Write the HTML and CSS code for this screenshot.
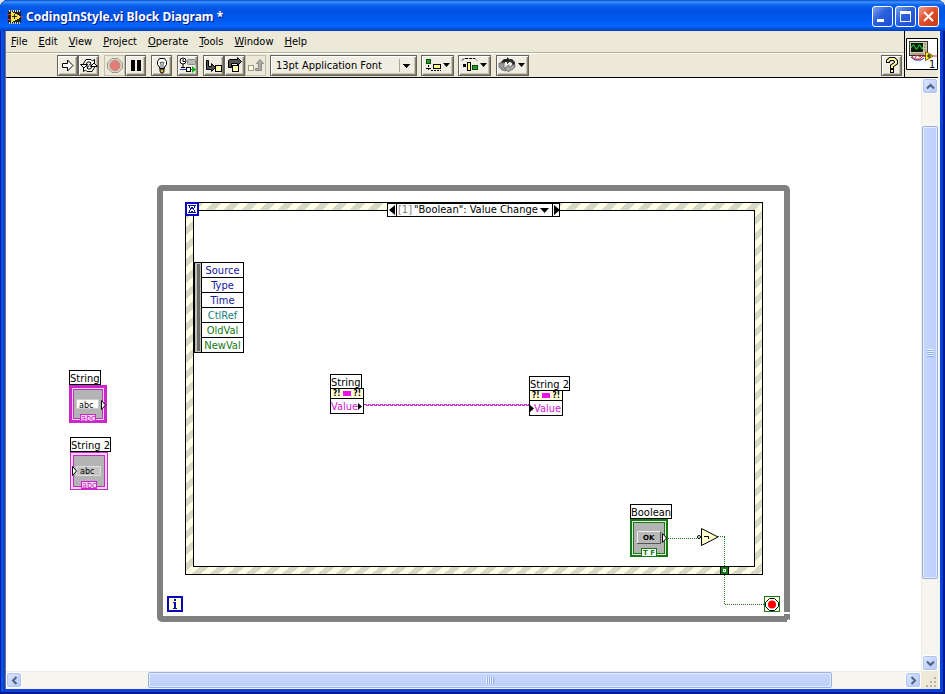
FILE: index.html
```html
<!DOCTYPE html>
<html lang="en">
<head>
<meta charset="utf-8">
<title>CodingInStyle.vi Block Diagram *</title>
<link rel="stylesheet" href="styles.css">
</head>
<body>
<div class="window">
  <header class="titlebar">
    <svg class="app-icon" width="16" height="16" viewBox="0 0 16 16" shape-rendering="crispEdges" aria-hidden="true">
      <path d="M1 2h13v12H1z" fill="#222"/>
      <path d="M2 1h1v2H2zM4 1h1v2H4zM6 1h1v2H6zM8 1h1v2H8zM10 1h1v2h-1zM12 1h1v2h-1zM2 13h1v2H2zM4 13h1v2H4zM6 13h1v2H6zM8 13h1v2H8zM10 13h1v2h-1zM12 13h1v2h-1z" fill="#d8d4b0"/>
      <path d="M0 5h4v1H0zM0 10h4v1H0zM12 7h4v1h-4z" fill="#e33030"/>
      <path d="M4 3h2v1h2v1h2v1h2v1h1v2h-1v1h-2v1H8v1H6v1H4z" fill="#ffe640"/><path d="M5 7h5v1H5zM7 5h1v5H7z" fill="#222"/>
    </svg>
    <h1 class="title">CodingInStyle.vi Block Diagram *</h1>
    <div class="win-buttons">
      <button class="win-btn" type="button" aria-label="Minimize"><svg width="19" height="19" viewBox="0 0 19 19"><path d="M4 12h7v3H4z" fill="#fff"/></svg></button>
      <button class="win-btn" type="button" aria-label="Maximize"><svg width="19" height="19" viewBox="0 0 19 19"><path d="M4 4h11v11H4zM5 7v7h9V7z" fill="#fff" fill-rule="evenodd"/></svg></button>
      <button class="win-btn close" type="button" aria-label="Close"><svg width="19" height="19" viewBox="0 0 19 19"><path d="M5 5l9 9M14 5l-9 9" stroke="#fff" stroke-width="2"/></svg></button>
    </div>
  </header>

  <div class="client">
    <div class="head">
      <div class="bars">
        <nav class="menubar">
          <button type="button"><u>F</u>ile</button>
          <button type="button"><u>E</u>dit</button>
          <button type="button"><u>V</u>iew</button>
          <button type="button"><u>P</u>roject</button>
          <button type="button"><u>O</u>perate</button>
          <button type="button"><u>T</u>ools</button>
          <button type="button"><u>W</u>indow</button>
          <button type="button"><u>H</u>elp</button>
        </nav>
        <div class="toolbar">
          <div class="group">
            <button class="tool" type="button" aria-label="Run"><svg width="18" height="17" viewBox="0 0 18 17"><path d="M3.500 6.500h5v-3.500l5.500 5.500-5.500 5.500v-3.500h-5z" fill="#fff" stroke="#000"/></svg></button>
            <button class="tool" type="button" aria-label="Run continuously"><svg width="18" height="17" viewBox="0 0 18 17"><g fill="#fff" stroke="#000"><path d="M3 7.500L6 2.500h5l1.500 1.500L14.500 2.500v5.500H9.500L11 6 10 5H7.500L6 7.500z"/><path d="M15 9.500L12 14.500H7L5.500 13 3.500 14.500V9h5L7 11l1 1h2.500L12 9.500z"/><path d="M.500 7.500h7L4 11zM17.500 9.500h-7L14 6z"/></g></svg></button>
          </div>
          <div class="group">
            <button class="tool disabled" type="button" aria-label="Abort" disabled><svg width="18" height="17" viewBox="0 0 18 17"><path d="M6 1.500h6l4.500 4.500v5l-4.500 4.500H6L1.500 11V6z" fill="#d9d4c5" stroke="#99968a"/><circle cx="9" cy="8.500" r="5" fill="#e47c78" stroke="#bb8680"/></svg></button>
            <button class="tool" type="button" aria-label="Pause"><svg width="18" height="17" viewBox="0 0 18 17"><path d="M4 3h4v11H4zM10 3h4v11h-4z"/></svg></button>
          </div>
          <div class="group">
            <button class="tool" type="button" aria-label="Highlight execution"><svg width="18" height="17" viewBox="0 0 18 17"><path d="M6.500 11.500V10L4.500 7.500v-3l2-3h5l2 3v3l-2 2.500v1.500z" fill="#fff" stroke="#000"/><path d="M7 5l1 2v4M11 5l-1 2v4M7 6l2-1 2 1" fill="none" stroke="#555"/><path d="M7 12h4v2l-1 2H8l-1-2z" fill="#dcb238" stroke="#000"/></svg></button>
          </div>
          <div class="group">
            <button class="tool" type="button" aria-label="Retain wire values"><svg width="18" height="17" viewBox="0 0 18 17"><circle cx="4" cy="4" r="3" fill="#fff" stroke="#000"/><path d="M4 7v4M2 10.500h4M4 4.500V2M4 4.500h2" stroke="#000"/><rect x="8.500" y="2.500" width="8" height="5" rx="1" fill="#bbb" stroke="#888"/><path d="M1 12.500h6" stroke="#1038e0"/><rect x="7.500" y="10.500" width="4" height="4" fill="#fff" stroke="#000"/><path d="M12 12.500h2" stroke="#080"/><path d="M13 9l4 3.500-4 3.500z" fill="#0aae20"/></svg></button>
          </div>
          <div class="group">
            <button class="tool" type="button" aria-label="Step into"><svg width="18" height="17" viewBox="0 0 18 17"><path d="M1.500 3.500h2v6h3v-3l4 4-4 4v-2h-5z" fill="#555" stroke="#000"/><rect x="10.500" y="8.500" width="6" height="6" fill="#ffffb0" stroke="#000"/></svg></button>
            <button class="tool" type="button" aria-label="Step over"><svg width="18" height="17" viewBox="0 0 18 17"><path d="M2.500 10.500v-7l1-1h8v-2l4 4-4 4v-2h-6v4z" fill="#555" stroke="#000"/><rect x="6.500" y="8.500" width="6" height="6" fill="#ffffb0" stroke="#000"/></svg></button>
            <button class="tool disabled" type="button" aria-label="Step out" disabled><svg width="18" height="17" viewBox="0 0 18 17"><rect x="1.500" y="8.500" width="5" height="5" fill="#ffffd0" stroke="#999"/><path d="M8.500 11.500h3v-5h-2l3.500-4 3.500 4h-2v7h-6z" fill="#aaa" stroke="#8c8a80"/></svg></button>
          </div>
          <select class="font-select" aria-label="Text settings"><option>13pt Application Font</option></select>
          <button class="tool wide" type="button" aria-label="Align objects"><svg width="30" height="17" viewBox="0 0 30 17"><rect x="3.500" y="2.500" width="4" height="4" fill="#25a02b" stroke="#064a08"/><rect x="10.500" y="7.500" width="7" height="4" fill="#ffff80" stroke="#000"/><path d="M5.500 8v6M3 11.500h5M8 13.500h10" stroke="#000" stroke-dasharray="2 1"/><path d="M20 6h7l-3.500 4z"/></svg></button>
          <button class="tool wide" type="button" aria-label="Distribute objects"><svg width="30" height="17" viewBox="0 0 30 17"><path d="M2 3.500l2-2h11l2 2" fill="none" stroke="#000" stroke-dasharray="3 1"/><path d="M3 7h3v3H3z"/><rect x="7.500" y="5.500" width="3" height="8" fill="#ffff80" stroke="#000"/><rect x="12.500" y="8.500" width="5" height="4" fill="#25a02b" stroke="#064a08"/><path d="M20 6h7l-3.500 4z"/></svg></button>
          <button class="tool wide reorder" type="button" aria-label="Reorder"><svg width="30" height="17" viewBox="0 0 30 17"><path d="M3 7V5l3-3h3V0l4 3.500L9 7V5H7L6 7z" fill="#222"/><path d="M12 2h2l3 3v5h-3V6l-2-1z" fill="#333"/><path d="M17 8v2l-3 3h-3v2l-5-3.500L11 8v2h2l1-2z" fill="#aaa" stroke="#777"/><path d="M1 6h5v5l2 1v2L4 13l-3-3z" fill="#999" stroke="#777"/><path d="M20 6h7l-3.500 4z"/></svg></button>
          <button class="tool help" type="button" aria-label="Context help"><svg width="18" height="17" viewBox="0 0 18 17"><path d="M5 6V4l2-2h4l2 2v2l-4 3v3" fill="none" stroke="#000" stroke-width="4"/><path d="M7 12h4v4H7z"/><path d="M5 5V4l2-2h4l2 2v2l-4 3v2" fill="none" stroke="#ffffa0" stroke-width="2"/><path d="M8 13h2v2H8z" fill="#ffffa0"/></svg></button>
        </div>
      </div>
      <div class="vi-pane">
        <svg width="32" height="32" viewBox="0 0 32 32" role="img" aria-label="VI icon">
          <path d="M.5.500h31v31H.5z" fill="#fff" stroke="#000"/>
          <rect x="3.500" y="3.500" width="18" height="14" fill="#d8cba8" stroke="#333"/>
          <rect x="5" y="5" width="12" height="9" fill="#031d08"/>
          <path d="M5 10l2-3 1 0 2 4 1 0 2-4 1 0 2 4 1-2" fill="none" stroke="#25dc40"/>
          <path d="M18 6h2M18 9h2M18 12h2M5 16h13" stroke="#777"/>
          <path d="M6 18l2 3h6l3-3 4 1M9 20l2-3 3 2 2-2" fill="none" stroke="#e02020"/>
          <path d="M5 19l4 3h6l3-2" fill="none" stroke="#20208c"/>
          <path d="M19.500 13.500v9l8-4.500z" fill="#ffe92f" stroke="#806000"/><path d="M21 18h4M23 16v4" stroke="#111"/><path d="M28 18h3" stroke="#e02020"/>
          <text class="vi-num" x="23" y="30">1</text>
        </svg>
      </div>
    </div>

    <div class="work">
      <main class="canvas">
        <section class="loop" aria-label="While loop"></section>
        <section class="event" aria-label="Event structure"><div class="event-inner"></div></section>

        <div class="selector">
          <button type="button" aria-label="Previous case"><svg width="8" height="12" viewBox="0 0 8 12"><path d="M7 1v10L1 6z"/></svg></button>
          <button class="case" type="button"><span class="idx">[1]</span>"Boolean": Value Change<svg width="9" height="11" viewBox="0 0 9 11"><path d="M0 3h9L4.500 8z"/></svg></button>
          <button type="button" aria-label="Next case"><svg width="8" height="12" viewBox="0 0 8 12"><path d="M1 1v10l6-5z"/></svg></button>
        </div>

        <div class="event-data">
          <div class="grip"></div>
          <ul>
            <li>Source</li><li>Type</li><li>Time</li>
            <li class="teal">CtlRef</li><li class="green">OldVal</li><li class="green">NewVal</li>
          </ul>
        </div>

        <svg class="wires" width="916" height="593" viewBox="6 78 916 593">
          <!-- loop resize corner -->
          <path d="M782 612h8v2h-8z" fill="#fff"/><path d="M787 620h1v-1h1v1h1v2h-3z" fill="#fff"/>
          <!-- event timeout -->
          <rect x="186" y="203" width="12" height="12" fill="#fff" stroke="#0808b8" stroke-width="2"/>
          <path d="M188 205h8v1h-8zM188 212h8v1h-8zM189 206h1v2h-1zM194 206h1v2h-1zM190 208h1v2h-1zM193 208h1v2h-1zM189 210h1v2h-1zM194 210h1v2h-1zM191 207h2v2h-2zM191 211h2v1h-2z" fill="#0808b8"/>
          <!-- iteration terminal -->
          <rect x="168" y="597" width="14" height="14" fill="#ffffe0" stroke="#0808b8" stroke-width="2"/>
          <path d="M174 599h2v2h-2zM173 602h3v6h1v1h-4v-1h1v-5h-1z" fill="#0808b8"/>
          <!-- string wire -->
          <path d="M364 404.500h165" stroke="#d030d0" stroke-dasharray="3 1"/><path d="M366 405.500h163" stroke="#d030d0" stroke-dasharray="3 1"/>
          <!-- boolean wires -->
          <g stroke="#187818" stroke-dasharray="1 1" fill="none"><path d="M668 538.500h30"/><path d="M718 536.500h7M724.500 537v67M725 604.500h39"/></g>
          <!-- not gate -->
          <circle cx="699" cy="537" r="1.500" fill="#fff" stroke="#000"/>
          <path d="M701.500 528.500v17l16.500-8.500z" fill="#ffffd0" stroke="#000"/><path d="M704 536.500h4.500v2.500" fill="none" stroke="#000"/>
          <!-- tunnel -->
          <rect x="720.500" y="566.500" width="8" height="8" fill="#187818" stroke="#000"/><rect x="723.500" y="569.500" width="2" height="2" fill="#187818" stroke="#fff"/>
          <!-- stop terminal -->
          <rect x="764.500" y="596.500" width="15" height="15" fill="#ffffe0" stroke="#187818"/>
          <path d="M769.500 598.500h5l4 4v4l-4 4h-5l-4-4v-4z" fill="#fff" stroke="#000"/><circle cx="772" cy="604.500" r="4" fill="#f00"/>
          <!-- string control -->
          <rect x="70.500" y="386.500" width="35" height="35" fill="#fbd8fb" stroke="#c828c8" stroke-width="3"/>
          <rect x="73.500" y="389.500" width="29" height="29" fill="#b4b4b4" stroke="#c828c8"/>
          <rect x="76.500" y="399.500" width="22" height="9" fill="#fff" stroke="#ccc"/>
          <path d="M101.500 400.500v9l4-4.500z" fill="#fff" stroke="#000"/>
          <rect x="80.500" y="414.500" width="15" height="7" fill="#fbd8fb" stroke="#c828c8"/>
          <text class="tiny" x="79" y="408">abc</text><text class="tiny type" x="81" y="421">abc</text>
          <!-- string indicator -->
          <rect x="70.500" y="452.500" width="37" height="37" fill="#fbd8fb" stroke="#c828c8"/>
          <rect x="73.500" y="455.500" width="31" height="31" fill="#b4b4b4" stroke="#c828c8"/>
          <rect x="76.500" y="466.500" width="24" height="9" fill="#c4c4c4" stroke="#ddd"/>
          <path d="M72.500 466.500v9l4-4.500z" fill="#fff" stroke="#000"/>
          <rect x="81.500" y="481.500" width="15" height="7" fill="#fbd8fb" stroke="#c828c8"/>
          <text class="tiny" x="80" y="474">abc</text><text class="tiny type" x="82" y="488">abc</text>
          <!-- boolean control -->
          <rect x="631" y="520" width="36" height="36" fill="#e4f0d8" stroke="#187818" stroke-width="2"/>
          <rect x="633.500" y="522.500" width="31" height="31" fill="#b4b4b4" stroke="#187818"/>
          <path d="M632.500 554.500v-33h33v33z" fill="none" stroke="#e4f0d8"/>
          <rect x="637.500" y="531.500" width="23" height="12" fill="#b8b8b8" stroke="#555"/><path d="M637.500 543v-11.500h23" fill="none" stroke="#eee"/>
          <path d="M662.500 533.500v9l4-4.500z" fill="#fff" stroke="#000"/>
          <rect x="641.500" y="548.500" width="15" height="8" fill="#fff" stroke="#187818"/>
          <text class="tiny ok" x="643" y="540">OK</text><text class="tiny tf" x="643" y="555">T F</text>
        </svg>

        <span class="label l-string">String</span>
        <span class="label l-string2">String 2</span>
        <span class="label l-boolean">Boolean</span>
        <div class="node n-string">
          <span class="label">String</span>
          <div class="prop"><div class="prop-head"><b>?!</b><i></i><b>?!</b></div><div class="prop-value">Value<svg width="4" height="7" viewBox="0 0 4 7"><path d="M0 0l4 3.500L0 7z"/></svg></div></div>
        </div>
        <div class="node n-string2">
          <span class="label">String 2</span>
          <div class="prop"><div class="prop-head"><b>?!</b><i></i><b>?!</b></div><div class="prop-value"><svg width="4" height="7" viewBox="0 0 4 7"><path d="M0 0l4 3.500L0 7z"/></svg>Value</div></div>
        </div>
      </main>

      <div class="scroll vertical">
        <button class="arrow" type="button" aria-label="Scroll up"><svg width="9" height="9" viewBox="0 0 9 9"><path d="M1 6.500L4.500 3 8 6.500"/></svg></button>
        <div class="track"><div class="before"></div><div class="thumb"></div><div class="after"></div></div>
        <button class="arrow" type="button" aria-label="Scroll down"><svg width="9" height="9" viewBox="0 0 9 9"><path d="M1 2.500L4.500 6 8 2.500"/></svg></button>
      </div>
      <div class="scroll horizontal">
        <button class="arrow" type="button" aria-label="Scroll left"><svg width="9" height="9" viewBox="0 0 9 9"><path d="M6.500 1L3 4.500 6.500 8"/></svg></button>
        <div class="track"><div class="before"></div><div class="thumb"></div><div class="after"></div></div>
        <button class="arrow" type="button" aria-label="Scroll right"><svg width="9" height="9" viewBox="0 0 9 9"><path d="M2.500 1L6 4.500 2.500 8"/></svg></button>
      </div>
      <div class="corner"><svg width="12" height="12" viewBox="0 0 12 12"><path d="M9 1h2v2H9zM5 5h2v2H5zM9 5h2v2H9zM1 9h2v2H1zM5 9h2v2H5zM9 9h2v2H9z" fill="#b8b4a2"/></svg></div>
    </div>
  </div>
</div>
</body>
</html>
```
FILE: styles.css
```css
* { box-sizing: border-box; }
body {
  margin: 0;
  background: #ece9d8;
  font: 11px/13px "DejaVu Sans Condensed", "Noto Sans", sans-serif;
  color: #000;
}
button, select { font: inherit; color: inherit; margin: 0; padding: 0; border: 0; background: none; }
svg { display: block; flex: none; }

.window {
  height: 100vh;
  display: flex;
  flex-direction: column;
  padding: 0 5px 5px;
  background: #0842d8;
  border-radius: 8px 8px 0 0;
  box-shadow: inset 1px 0 #001ea0, inset -2px -2px #001a90, inset 3px 0 #0b50ea;
  overflow: hidden;
}

.titlebar {
  flex: none;
  height: 31px;
  margin: 0 -5px;
  padding: 2px 6px 0 7px;
  display: flex;
  align-items: center;
  background: linear-gradient(#0a4ed0 0, #3c90ff 2px, #0a62ee 5px, #0054e3 10px, #0058ee 20px, #0066ff 26px, #0050d8 29px, #003dba 31px);
}
.title {
  flex: 1;
  margin: 0 0 0 3px;
  font: bold 12px/18px "Noto Sans", sans-serif;
  color: #fff;
  text-shadow: 1px 1px #0a1883;
}
.win-buttons { display: flex; gap: 2px; }
.win-btn {
  width: 21px;
  height: 21px;
  border: 1px solid #fff;
  border-radius: 3px;
  background: linear-gradient(135deg, #7da2f0, #2a5fdd 45%, #1c4fd0);
}
.win-btn.close { background: linear-gradient(135deg, #f0a088, #e0502c 45%, #c8391a); }

.client {
  flex: 1;
  min-height: 0;
  display: flex;
  flex-direction: column;
  border-left: 1px solid #77756c;
  border-right: 2px solid #f6f5ee;
  background: #ece9d8;
}
.head { flex: none; display: flex; border-bottom: 1px solid #000; }
.bars { flex: 1; }
.menubar {
  display: flex;
  align-items: center;
  gap: 11px;
  height: 22px;
  padding: 0 5px;
  border-bottom: 1px solid #b4b09e;
}
.toolbar {
  display: flex;
  align-items: center;
  gap: 4px;
  height: 24px;
  padding-left: 51px;
  padding-right: 2px;
  border-top: 1px solid #fff;
}
.group { display: flex; }
.group + .group { margin-left: 1px; }
.tool {
  width: 21px;
  height: 21px;
  display: flex;
  align-items: center;
  justify-content: center;
  border: 1px solid #66645a;
  background: #f0eee2;
  box-shadow: inset 1px 1px #fff, inset -1px -1px #88867a, inset -2px -2px #c8c4b2;
}
.tool.disabled { border-color: #c4c0ae; background: #ece9d8; box-shadow: none; }
.tool.wide { width: 33px; }
.tool.reorder { margin-left: 1px; }
.tool.help { margin-left: auto; }
.font-select {
  width: 147px;
  height: 21px;
  padding: 0 5px 1px;
  appearance: none;
  border: 1px solid #66645a;
  border-radius: 0;
  box-shadow: inset 1px 1px #fff, inset -1px -1px #88867a, inset -2px -2px #c8c4b2;
  background:
    conic-gradient(from -45deg at 50% 100%, #000 90deg, transparent 0) right 5px top 8px / 8px 4px no-repeat,
    linear-gradient(#aaa695, #aaa695) right 16px top 3px / 1px 13px no-repeat,
    #f0eee2;
  background:
    conic-gradient(from 135deg at 50% 100%, transparent 180deg, #000 180deg 270deg, transparent 0) right 5px top 8px / 0 0 no-repeat,
    linear-gradient(45deg, transparent 50%, #000 50%) right 9px top 8px / 4px 4px no-repeat,
    linear-gradient(-45deg, transparent 50%, #000 50%) right 5px top 8px / 4px 4px no-repeat,
    linear-gradient(#aaa695, #aaa695) right 16px top 3px / 1px 13px no-repeat,
    #f0eee2;
}
.vi-pane { flex: none; display: flex; align-items: center; padding: 0 0 0 1px; border-left: 1px solid #000; }
.vi-num { font: 11px "DejaVu Sans Condensed", sans-serif; }

.work {
  flex: 1;
  min-height: 0;
  display: grid;
  grid-template-columns: 1fr 17px;
  grid-template-rows: 1fr 18px;
}
.canvas { position: relative; overflow: hidden; background: #fff; }
.loop {
  position: absolute;
  left: 151px; top: 107px;
  width: 633px; height: 437px;
  border: 6px solid #808080;
  border-radius: 5px 5px 0 5px;
}
.event {
  position: absolute;
  left: 179px; top: 124px;
  width: 578px; height: 373px;
  padding: 7px;
  border: 1px solid #000;
  background: linear-gradient(to bottom right, #ffffe6 25%, #d8d8c6 25% 50%, #ffffe6 50% 75%, #d8d8c6 75%) 0 0 / 18px 16px;
}
.event-inner { height: 100%; border: 1px solid #000; background: #fff; }

.selector {
  position: absolute;
  left: 381px; top: 125px;
  display: flex;
  width: 173px;
  height: 14px;
  border: 1px solid #000;
  background: #fff;
}
.selector .case {
  flex: 1;
  display: flex;
  align-items: center;
  gap: 2px;
  padding: 0 3px 0 1px;
  border: solid #000;
  border-width: 0 1px;
  white-space: nowrap;
  line-height: 12px;
}
.selector .case svg { margin-left: auto; }
.idx { color: #808080; }

.event-data {
  position: absolute;
  left: 188px; top: 184px;
  display: flex;
  width: 50px;
  border: 1px solid #000;
}
.grip { width: 6px; background: #686868; border: solid #c0c0b4; border-width: 1px 1px 1px 2px; }
.event-data ul {
  flex: 1;
  margin: 0;
  padding: 0;
  list-style: none;
  border-left: 1px solid #000;
  background: #fff;
  text-align: center;
  color: #1414a0;
}
.event-data li { height: 15px; line-height: 15px; }
.event-data li + li { border-top: 1px solid #000; }
.event-data li:first-child { height: 14px; }
.event-data .teal { color: #148080; }
.event-data .green { color: #147814; }

.wires { position: absolute; left: 0; top: 0; }
.tiny { font: 8px "DejaVu Sans", sans-serif; }
.type { fill: #c828c8; }
.tf { font-weight: bold; font-size: 7px; fill: #187818; }
.ok { font-size: 7px; font-weight: bold; }

.label {
  display: block;
  width: max-content;
  height: 15px;
  border: 1px solid #000;
  background: #fff;
  line-height: 15px;
  white-space: nowrap;
}
.l-string { position: absolute; left: 63px; top: 292px; }
.l-string2 { position: absolute; left: 64px; top: 359px; }
.l-boolean { position: absolute; left: 624px; top: 426px; }
.node { position: absolute; }
.n-string { left: 324px; top: 296px; }
.n-string2 { left: 523px; top: 298px; }
.prop { width: 34px; margin-top: -1px; border: 1px solid #000; background: #fff; }
.prop-head {
  display: flex;
  align-items: center;
  justify-content: space-between;
  height: 10px;
  padding: 0 2px;
  border-bottom: 1px solid #000;
  background: #ffffd8;
  font-size: 8px;
  line-height: 9px;
}
.prop-head i { width: 8px; height: 5px; background: #f010f0; }
.prop-value { display: flex; align-items: center; height: 14px; color: #d020d0; }

.scroll { display: flex; background: #f6f5ef; }
.vertical { flex-direction: column; border-left: 1px solid #eeede5; }
.horizontal { border-top: 1px solid #eeede5; }
.arrow {
  flex: none;
  width: 16px;
  height: 16px;
  display: flex;
  align-items: center;
  justify-content: center;
  border: 1px solid #fff;
  border-radius: 3px;
  background: linear-gradient(135deg, #dce6ff, #b4c8f6);
  box-shadow: inset 0 0 0 1px #b0c4f0;
}
.arrow path { fill: none; stroke: #4d6185; stroke-width: 2; }
.track { flex: 1; display: flex; }
.vertical .track { flex-direction: column; }
.thumb {
  border: 1px solid #98b0e4;
  border-radius: 2px;
  box-shadow: inset 0 0 0 1px #e4ecff;
  display: flex;
  align-items: center;
  justify-content: center;
}
.thumb::after { content: ""; }
.vertical .before { flex: 32; }
.vertical .thumb { flex: 453; background: linear-gradient(90deg, #c8d6fb, #bad0fc); }
.vertical .after { flex: 76; }
.vertical .thumb::after { width: 7px; height: 8px; background: repeating-linear-gradient(#eef4fe 0 1px, #8cb0f8 1px 2px); }
.horizontal .before { flex: 126; }
.horizontal .thumb { flex: 685; height: 16px; background: linear-gradient(#c8d6fb, #bad0fc); }
.horizontal .after { flex: 73; }
.horizontal .thumb::after { width: 8px; height: 7px; background: repeating-linear-gradient(90deg, #eef4fe 0 1px, #8cb0f8 1px 2px); }
.corner { display: flex; align-items: flex-end; justify-content: flex-end; padding: 1px; }
```
